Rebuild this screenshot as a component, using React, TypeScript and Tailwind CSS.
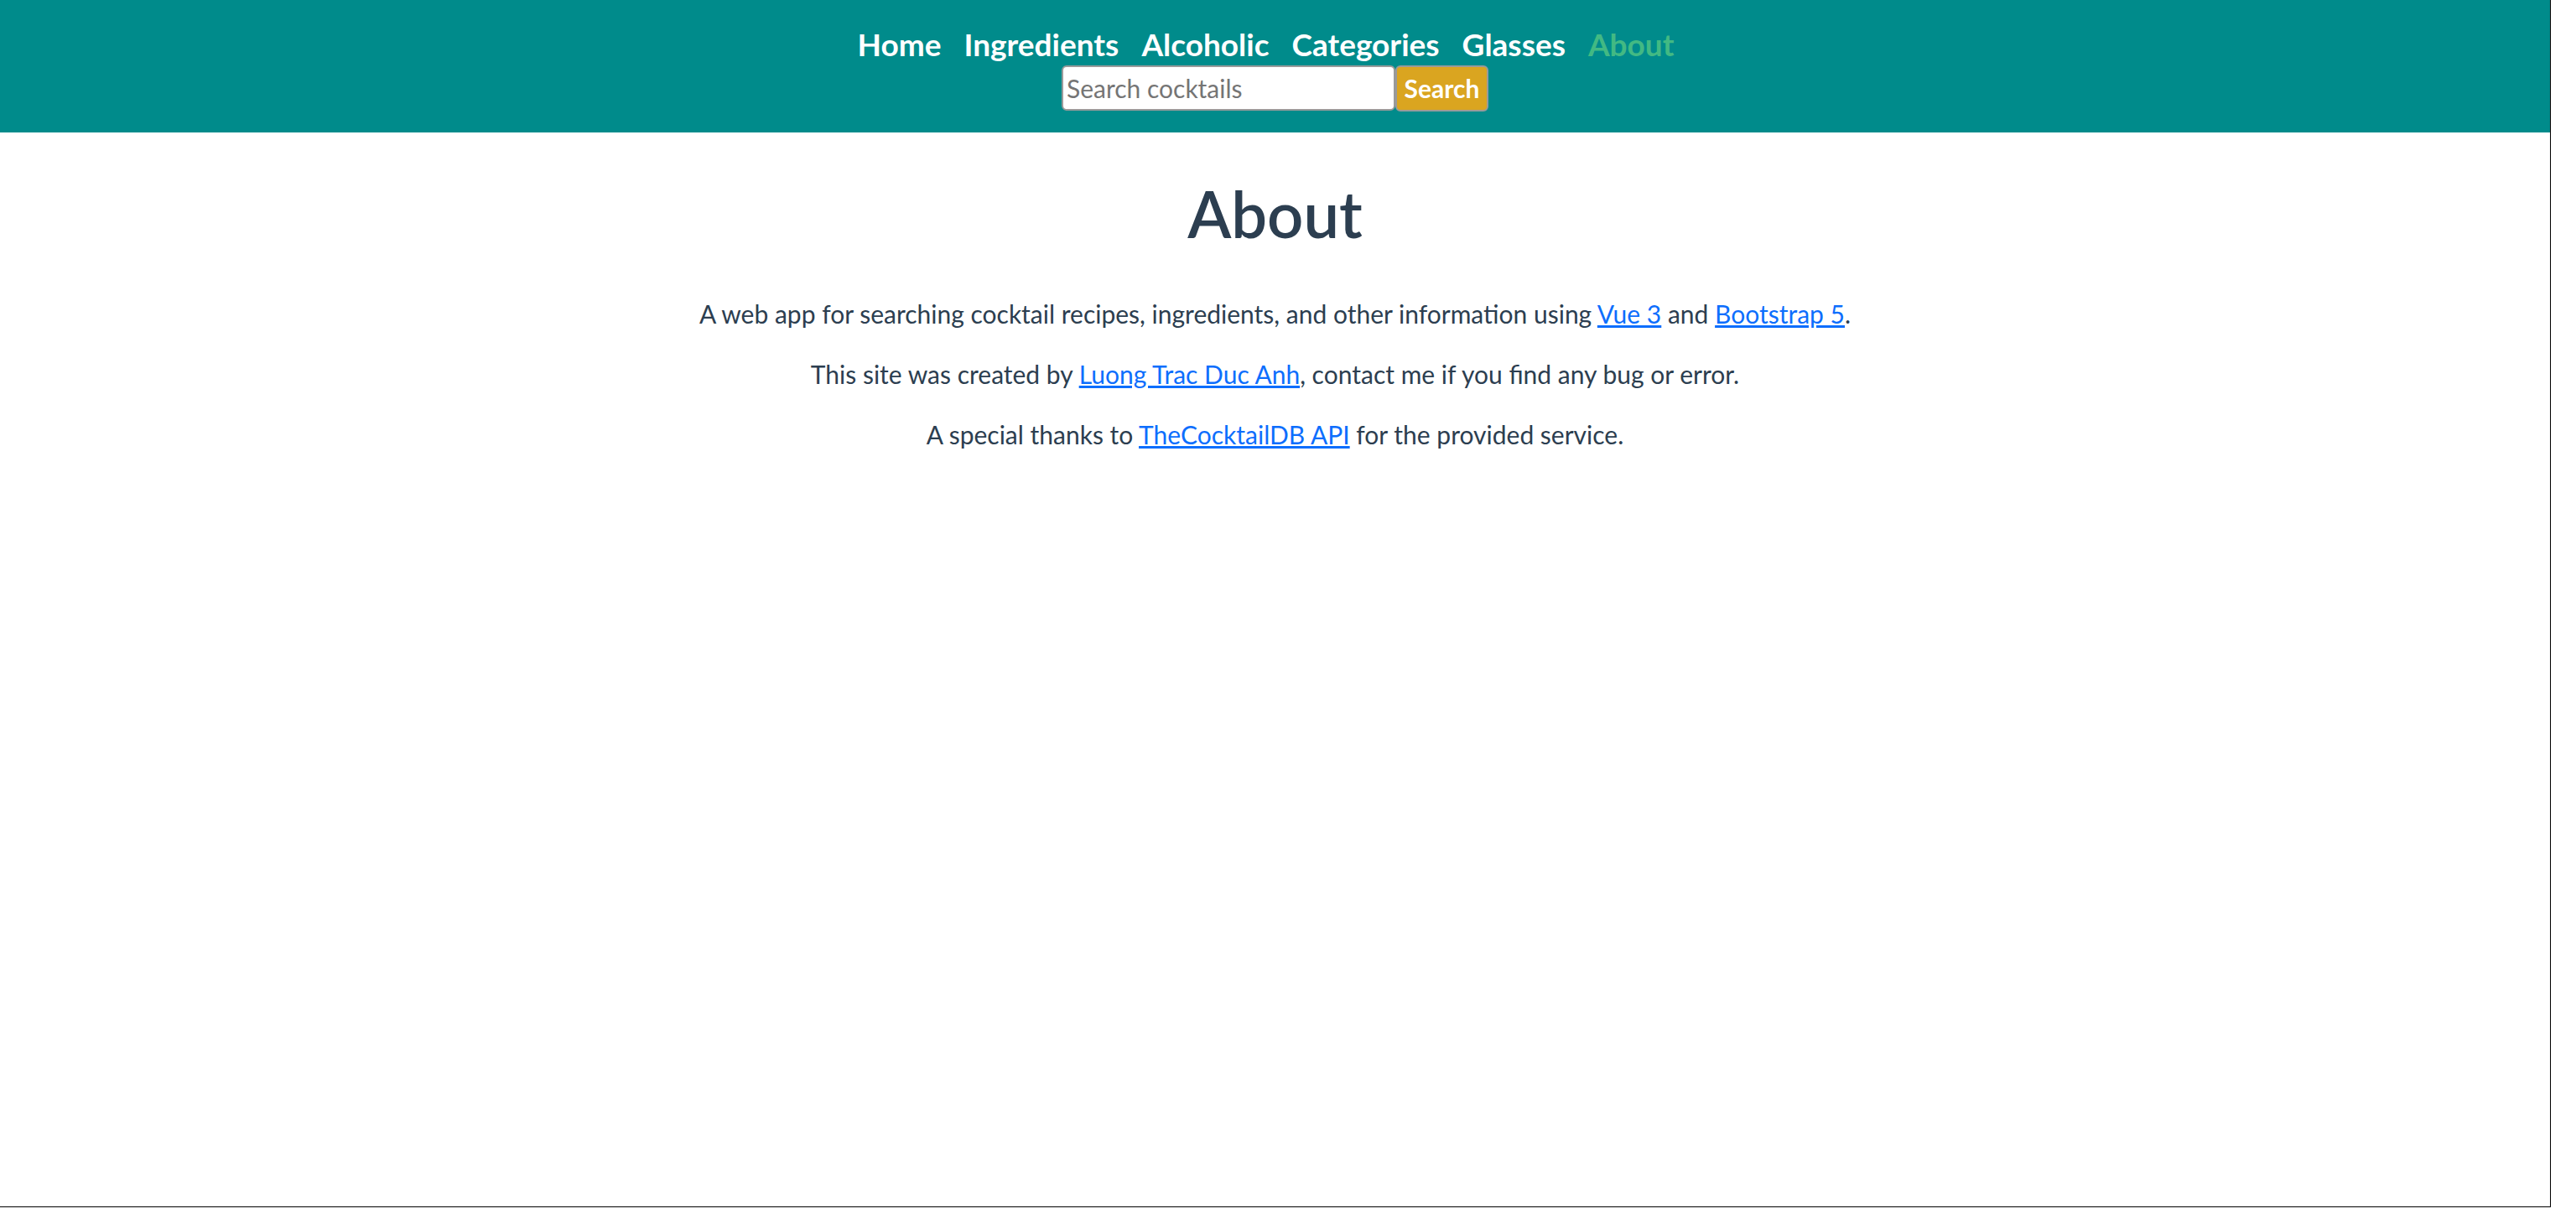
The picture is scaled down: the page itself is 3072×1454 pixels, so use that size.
import React from 'react';

const links = ['Home', 'Ingredients', 'Alcoholic', 'Categories', 'Glasses', 'About'];

export default function App() {
  return (
    <div className="w-[3042px] h-[1440px] border-r border-b border-black bg-white font-['Lato',sans-serif]">
      {/* Header */}
      <header className="h-[158px] bg-[#008b8b] flex flex-col items-center pt-[26px]">
        <nav className="flex gap-[27px] pr-[22px] text-[37px] font-bold leading-[54px]">
          {links.map((l) => (
            <a key={l} href="#" className={l === 'About' ? 'text-[#42b983]' : 'text-white'}>
              {l}
            </a>
          ))}
        </nav>
        <form className="flex -mt-[2px]" onSubmit={(e) => e.preventDefault()}>
          <input
            type="text"
            placeholder="Search cocktails"
            className="w-[398px] h-[54px] bg-white border-2 border-[#9a9a9a] rounded-[6px] px-[4px] text-[30px] placeholder:text-[#757575] outline-none"
          />
          <button
            type="submit"
            className="w-[111px] h-[55px] bg-[#daa520] border-2 border-[#9a9a9a] rounded-[6px] text-white text-[30px] font-bold"
          >
            Search
          </button>
        </form>
      </header>

      {/* Content */}
      <main className="text-center text-[#2c3e50]">
        <h1 className="text-[76px] font-semibold leading-[88px] mt-[53px] mb-[53px]">About</h1>
        <p className="text-[30px] leading-[45px] mb-[27px]">
          A web app for searching cocktail recipes, ingredients, and other information using{' '}
          <a href="#" className="text-[#0d6efd] underline">Vue 3</a> and{' '}
          <a href="#" className="text-[#0d6efd] underline">Bootstrap 5</a>.
        </p>
        <p className="text-[30px] leading-[45px] mb-[27px]">
          This site was created by{' '}
          <a href="#" className="text-[#0d6efd] underline">Luong Trac Duc Anh</a>, contact me if you find any bug or error.
        </p>
        <p className="text-[30px] leading-[45px]">
          A special thanks to{' '}
          <a href="#" className="text-[#0d6efd] underline">TheCocktailDB API</a> for the provided service.
        </p>
      </main>
    </div>
  );
}
